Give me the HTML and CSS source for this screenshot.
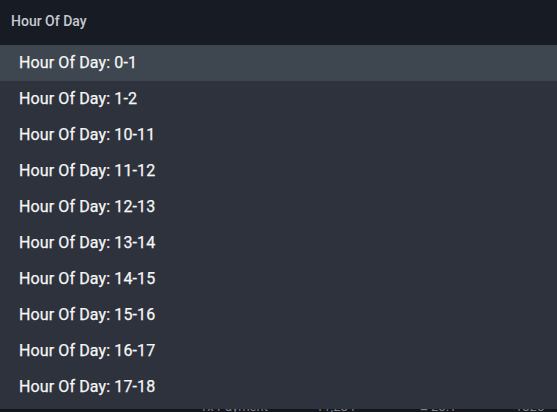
FILE: index.html
```html
<!DOCTYPE html>
<html>
<head>
<meta charset="utf-8">
<link rel="stylesheet" href="styles.css">
</head>
<body>
<div class="panel">
  <div class="header">Hour Of Day</div>
  <ul class="list">
    <li class="item active">Hour Of Day: 0-1</li>
    <li class="item">Hour Of Day: 1-2</li>
    <li class="item">Hour Of Day: 10-11</li>
    <li class="item">Hour Of Day: 11-12</li>
    <li class="item">Hour Of Day: 12-13</li>
    <li class="item">Hour Of Day: 13-14</li>
    <li class="item">Hour Of Day: 14-15</li>
    <li class="item">Hour Of Day: 15-16</li>
    <li class="item">Hour Of Day: 16-17</li>
    <li class="item">Hour Of Day: 17-18</li>
  </ul>
</div>
<div class="under">
  <span class="frag f1">Tx Payment</span>
  <span class="frag f2">11,284</span>
  <span class="frag f3">■ 23.1</span>
  <span class="frag f4">1825</span>
</div>
</body>
</html>
```
FILE: styles.css
```css
html, body {
  margin: 0;
  padding: 0;
  background: #13161c;
  width: 557px;
  height: 412px;
  overflow: hidden;
  font-family: Roboto, "Liberation Sans", sans-serif;
}
.panel {
  background: #2d323d;
  padding-bottom: 4px;
}
.header {
  height: 45px;
  background: #171b24;
  color: #c6cad0;
  font-size: 14px;
  font-weight: 500;
  padding-left: 11px;
  line-height: 42px;
  box-sizing: border-box;
}
.list {
  list-style: none;
  margin: 0;
  padding: 0;
}
.item {
  height: 36px;
  line-height: 36px;
  padding-left: 19px;
  color: #f6f6f6;
  font-size: 16px;
  font-weight: 400;
  letter-spacing: 0.12px;
  -webkit-text-stroke: 0.25px #f6f6f6;
}
.item.active {
  background: #3e4650;
}
.under {
  height: 3px;
  overflow: hidden;
  position: relative;
  color: #7b818b;
  font-size: 13px;
}
.frag {
  position: absolute;
  top: -10px;
  white-space: nowrap;
}
.f1 { left: 200px; }
.f2 { left: 316px; }
.f3 { left: 420px; }
.f4 { left: 515px; }
```
